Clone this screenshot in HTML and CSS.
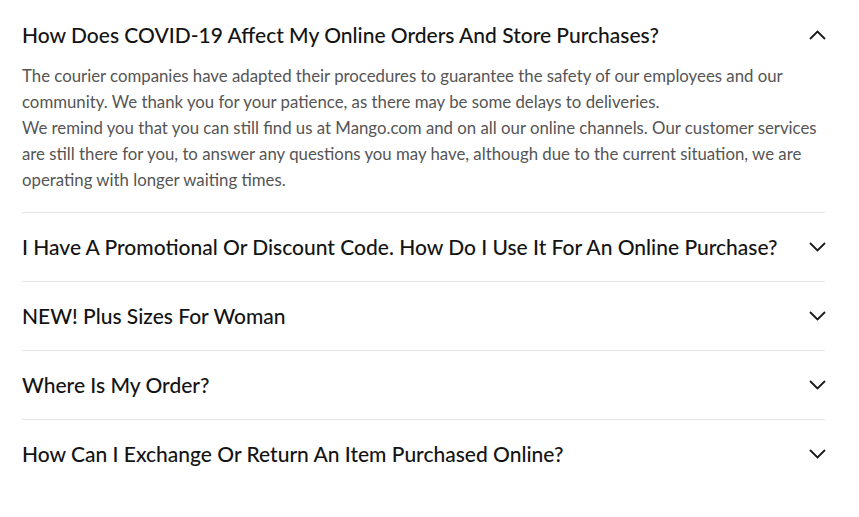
FILE: index.html
```html
<!DOCTYPE html>
<html lang="en">
<head>
<meta charset="utf-8">
<title>FAQ</title>
<link rel="stylesheet" href="styles.css">
</head>
<body>
<div class="faq">
  <div class="item open">
    <div class="question">
      <span class="q-text">How Does COVID-19 Affect My Online Orders And Store Purchases?</span>
      <svg class="chev" width="17" height="10" viewBox="0 0 17 10"><path d="M1 9 L8.5 1.6 L16 9" fill="none" stroke="#1a1a1a" stroke-width="1.8"/></svg>
    </div>
    <div class="answer">
      <p>The courier companies have adapted their procedures to guarantee the safety of our employees and our community. We thank you for your patience, as there may be some delays to deliveries.</p>
      <p>We remind you that you can still find us at Mango.com and on all our online channels. Our customer services are still there for you, to answer any questions you may have, although due to the current situation, we are operating with longer waiting times.</p>
    </div>
  </div>
  <div class="item">
    <div class="question">
      <span class="q-text">I Have A Promotional Or Discount Code. How Do I Use It For An Online Purchase?</span>
      <svg class="chev" width="17" height="10" viewBox="0 0 17 10"><path d="M1 1 L8.5 8.4 L16 1" fill="none" stroke="#1a1a1a" stroke-width="1.8"/></svg>
    </div>
  </div>
  <div class="item">
    <div class="question">
      <span class="q-text">NEW! Plus Sizes For Woman</span>
      <svg class="chev" width="17" height="10" viewBox="0 0 17 10"><path d="M1 1 L8.5 8.4 L16 1" fill="none" stroke="#1a1a1a" stroke-width="1.8"/></svg>
    </div>
  </div>
  <div class="item">
    <div class="question">
      <span class="q-text">Where Is My Order?</span>
      <svg class="chev" width="17" height="10" viewBox="0 0 17 10"><path d="M1 1 L8.5 8.4 L16 1" fill="none" stroke="#1a1a1a" stroke-width="1.8"/></svg>
    </div>
  </div>
  <div class="item">
    <div class="question">
      <span class="q-text">How Can I Exchange Or Return An Item Purchased Online?</span>
      <svg class="chev" width="17" height="10" viewBox="0 0 17 10"><path d="M1 1 L8.5 8.4 L16 1" fill="none" stroke="#1a1a1a" stroke-width="1.8"/></svg>
    </div>
  </div>
</div>
</body>
</html>
```
FILE: styles.css
```css
html, body {
  margin: 0;
  padding: 0;
  background: #ffffff;
}

body {
  font-family: "Lato", "Open Sans", sans-serif;
  color: #111111;
}

.faq {
  width: 803px;
  margin: 0 0 0 22px;
  padding-top: 1px;
}

.item {
  border-bottom: 1px solid #e6e6e6;
}

.item:last-child {
  border-bottom: none;
}

.question {
  display: flex;
  align-items: center;
  justify-content: space-between;
  padding: 22px 0;
  line-height: 24px;
}

.q-text {
  font-size: 21px;
  font-weight: 500;
  color: #141414;
}

.chev {
  flex: none;
  margin-right: -1px;
}

.answer {
  padding: 0 0 19px;
  margin-top: -6px;
  font-size: 16.8px;
  line-height: 26px;
  color: #555555;
}

.answer p {
  margin: 0;
}
```
